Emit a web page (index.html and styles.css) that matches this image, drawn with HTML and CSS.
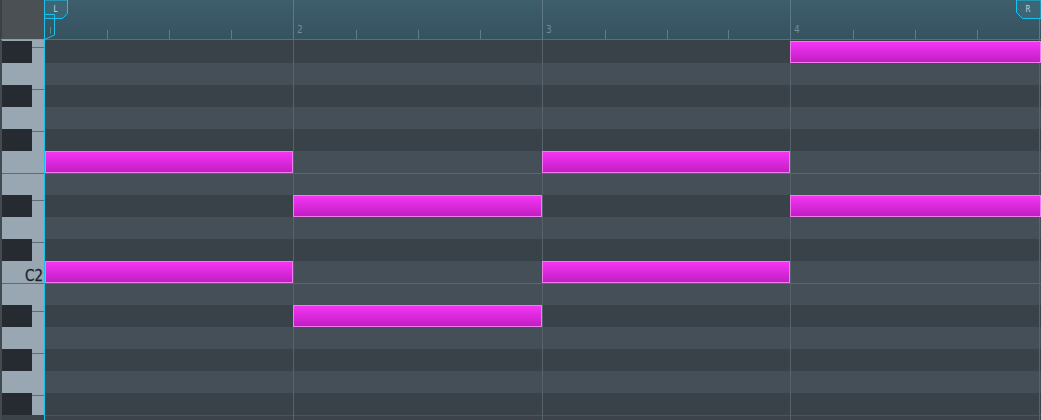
FILE: index.html
```html
<!DOCTYPE html>
<html>
<head>
<meta charset="utf-8">
<title>Piano Roll</title>
<link rel="stylesheet" href="styles.css">
</head>
<body>
<div class="app">
  <div class="corner"></div>
  <div class="cyan"></div>
  <div class="ruler">
    <div class="bar">
      <div class="beat"></div>
      <div class="beat"><i class="tick"></i></div>
      <div class="beat"><i class="tick"></i></div>
      <div class="beat"><i class="tick"></i></div>
    </div>
    <div class="bar">
      <div class="beat"><span class="num">2</span></div>
      <div class="beat"><i class="tick"></i></div>
      <div class="beat"><i class="tick"></i></div>
      <div class="beat"><i class="tick"></i></div>
    </div>
    <div class="bar">
      <div class="beat"><span class="num">3</span></div>
      <div class="beat"><i class="tick"></i></div>
      <div class="beat"><i class="tick"></i></div>
      <div class="beat"><i class="tick"></i></div>
    </div>
    <div class="bar">
      <div class="beat"><span class="num">4</span></div>
      <div class="beat"><i class="tick"></i></div>
      <div class="beat"><i class="tick"></i></div>
      <div class="beat"><i class="tick"></i></div>
    </div>
    <div class="bar"></div>
  </div>

  <div class="keys">
    <div class="whites">
      <div class="wk h8"></div>
      <div class="wk h42"></div>
      <div class="wk h42"></div>
      <div class="wk h42"></div>
      <div class="wk h27"></div>
      <div class="wk h42"></div>
      <div class="wk h41"><span class="keyname">C2</span></div>
      <div class="wk h28"></div>
      <div class="wk h42"></div>
      <div class="wk h42"></div>
      <div class="wk h19 last"></div>
    </div>
    <div class="blacks">
      <div class="slot"><div class="bk"></div></div>
      <div class="slot"></div>
      <div class="slot"><div class="bk"></div></div>
      <div class="slot"></div>
      <div class="slot"><div class="bk"></div></div>
      <div class="slot"></div>
      <div class="slot"></div>
      <div class="slot"><div class="bk"></div></div>
      <div class="slot"></div>
      <div class="slot"><div class="bk"></div></div>
      <div class="slot"></div>
      <div class="slot"></div>
      <div class="slot"><div class="bk"></div></div>
      <div class="slot"></div>
      <div class="slot"><div class="bk"></div></div>
      <div class="slot"></div>
      <div class="slot"><div class="bk"></div></div>
    </div>
  </div>

  <div class="grid">
    <div class="stripes">
      <div class="lane d"></div>
      <div class="lane l"></div>
      <div class="lane d"></div>
      <div class="lane l"></div>
      <div class="lane d"></div>
      <div class="lane l"></div>
      <div class="lane l sep"></div>
      <div class="lane d"></div>
      <div class="lane l"></div>
      <div class="lane d"></div>
      <div class="lane l"></div>
      <div class="lane l sep"></div>
      <div class="lane d"></div>
      <div class="lane l"></div>
      <div class="lane d"></div>
      <div class="lane l"></div>
      <div class="lane d"></div>
      <div class="lane foot"></div>
    </div>
    <div class="bars">
      <div></div><div></div><div></div><div></div><div></div>
    </div>
    <div class="notes">
      <div class="note" style="grid-area: 1 / 4 / 2 / 6"></div>
      <div class="note" style="grid-area: 6 / 1"></div>
      <div class="note" style="grid-area: 6 / 3"></div>
      <div class="note" style="grid-area: 8 / 2"></div>
      <div class="note" style="grid-area: 8 / 4 / 9 / 6"></div>
      <div class="note" style="grid-area: 11 / 1"></div>
      <div class="note" style="grid-area: 11 / 3"></div>
      <div class="note" style="grid-area: 13 / 2"></div>
    </div>
  </div>

  <div class="foot-left"></div>

  <svg class="loc-l" width="25" height="41" viewBox="0 0 25 41">
    <path d="M0.5 0 V18.5 H18.5 L23.5 13.5 V0 Z" fill="#3d6575" stroke="#14c3ef" stroke-width="1"/>
    <rect x="6" y="27" width="1" height="7" fill="#62808d"/>
    <path d="M0.5 14.5 H10.5 V35 L0.5 39.5" fill="none" stroke="#14c3ef" stroke-width="1"/>
    <text x="9.5" y="12" class="loc-text">L</text>
  </svg>
  <svg class="loc-r" width="25" height="41" viewBox="0 0 25 41">
    <path d="M0.5 0 V12.5 L6.5 18.5 H25 V0 Z" fill="#3d6575" stroke="#14c3ef" stroke-width="1"/>
    <text x="9.5" y="12" class="loc-text">R</text>
  </svg>
</div>
</body>
</html>
```

FILE: styles.css
```css
* { box-sizing: border-box; margin: 0; padding: 0; }
html, body { width: 1041px; height: 420px; overflow: hidden; background: #3a4249; }
body { font-family: "DejaVu Sans", "Liberation Sans", sans-serif; }

.app {
  position: relative;
  display: grid;
  grid-template-columns: 44px 1px 996px;
  grid-template-rows: 40px 375px 5px;
  width: 1041px;
  height: 420px;
}

.corner {
  background: #4b5055;
  border-left: 2px solid #3c4146;
  border-bottom: 1px solid #8f9da8;
}

.cyan { grid-column: 2; grid-row: 1 / -1; background: #14c3ef; }

.ruler {
  display: grid;
  grid-template-columns: 248px 249px 248px 249px 2px;
  background: linear-gradient(#3e5e6c, #35525f);
  border-bottom: 1px solid #5c6d77;
}
.bar { display: grid; grid-template-columns: repeat(4, 1fr); }
.bar + .bar { border-left: 1px solid #5e7985; }
.beat { display: flex; align-items: flex-end; }
.tick { display: block; width: 1px; height: 9px; background: #5f7c89; }
.num {
  font-family: "DejaVu Sans Condensed", "DejaVu Sans", sans-serif;
  font-stretch: condensed;
  font-size: 10px;
  line-height: 10px;
  color: #6f8e9c;
  margin: 0 0 4px 3px;
}

.keys {
  display: grid;
  border-left: 2px solid #434a50;
  background: #98a7b2;
}
.keys > * { grid-area: 1 / 1; }
.whites { display: flex; flex-direction: column; }
.wk {
  flex: none;
  border-bottom: 1px solid #5f6c76;
  display: flex;
  justify-content: flex-end;
  align-items: flex-end;
}
.wk.last { border-bottom: 0; }
.h8 { height: 8px; }
.h19 { height: 19px; }
.h27 { height: 27px; }
.h28 { height: 28px; }
.h41 { height: 41px; }
.h42 { height: 42px; }
.keyname {
  font-family: "DejaVu Sans Condensed", "DejaVu Sans", sans-serif;
  font-stretch: condensed;
  font-size: 15px;
  line-height: 12px;
  color: #1c2229;
  -webkit-text-stroke: 0.3px #1c2229;
  margin: 0 1px 1px 0;
}
.blacks { display: flex; flex-direction: column; padding-top: 1px; }
.slot { flex: none; height: 22px; }
.bk { width: 30px; height: 22px; background: #262b31; }

.grid { grid-column: 3; grid-row: 2 / 4; display: grid; overflow: hidden; }
.grid > * { grid-area: 1 / 1; }
.stripes { display: flex; flex-direction: column; padding-top: 1px; background: #3a4249; }
.lane { flex: none; height: 22px; }
.lane.d { background: #3a4249; }
.lane.l { background: #454f57; }
.lane.sep { box-shadow: inset 0 1px 0 #5a6670; }
.lane.foot { height: 5px; background: #3c434a; box-shadow: inset 0 1px 0 #4a545c; }
.bars { display: grid; grid-template-columns: 248px 249px 248px 249px 2px; }
.bars > div + div { border-left: 1px solid #57636c; }
.notes {
  display: grid;
  grid-template-columns: 248px 249px 248px 249px 2px;
  grid-template-rows: repeat(17, 22px);
  align-content: start;
  padding-top: 1px;
}
.note {
  border: 1px solid #ee7cee;
  background: linear-gradient(#f535f5, #c21ec2);
}

.foot-left { grid-column: 1; grid-row: 3; background: #3c4349; border-left: 2px solid #434a50; }

.loc-l { position: absolute; left: 44px; top: 0; }
.loc-r { position: absolute; right: 0; top: 0; }
.loc-text {
  font-family: "DejaVu Sans Condensed", "DejaVu Sans", sans-serif;
  font-size: 8px;
  fill: #c9d7de;
}
```
